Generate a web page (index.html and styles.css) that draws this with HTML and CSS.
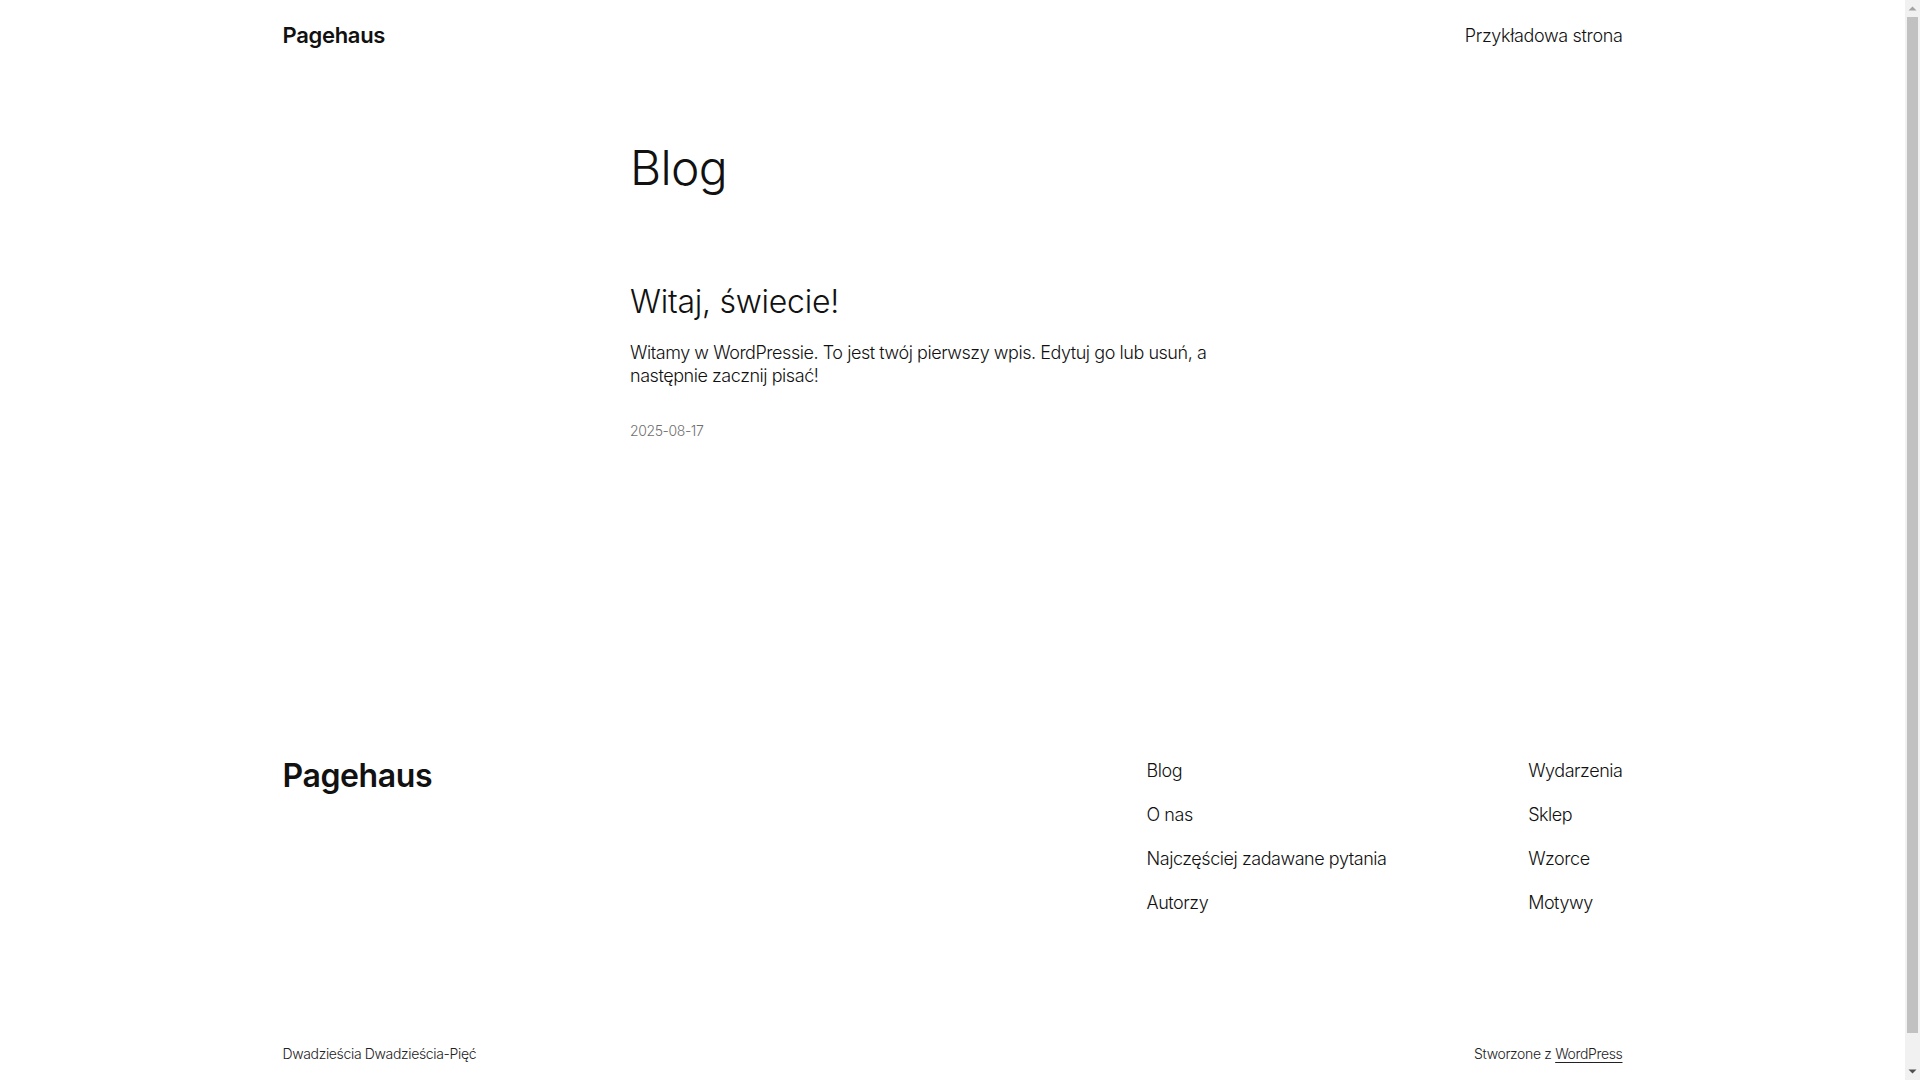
FILE: index.html
```html
<!DOCTYPE html>
<html lang="pl">
<head>
<meta charset="utf-8">
<title>Blog – Pagehaus</title>
<link rel="stylesheet" href="styles.css">
</head>
<body>
<div class="page">
  <header class="site-header">
    <a class="site-title" href="#">Pagehaus</a>
    <nav class="header-nav"><a href="#">Przykładowa strona</a></nav>
  </header>
  <main class="main">
    <h1 class="page-title">Blog</h1>
    <article class="post">
      <h2 class="post-title"><a href="#">Witaj, świecie!</a></h2>
      <p class="post-excerpt">Witamy w WordPressie. To jest twój pierwszy wpis. Edytuj go lub usuń, a następnie zacznij pisać!</p>
      <time class="post-date">2025-08-17</time>
    </article>
  </main>
  <footer class="site-footer">
    <div class="footer-row">
      <a class="footer-title" href="#">Pagehaus</a>
      <div class="footer-navs">
        <ul class="footer-nav">
          <li><a href="#">Blog</a></li>
          <li><a href="#">O nas</a></li>
          <li><a href="#">Najczęściej zadawane pytania</a></li>
          <li><a href="#">Autorzy</a></li>
        </ul>
        <ul class="footer-nav">
          <li><a href="#">Wydarzenia</a></li>
          <li><a href="#">Sklep</a></li>
          <li><a href="#">Wzorce</a></li>
          <li><a href="#">Motywy</a></li>
        </ul>
      </div>
    </div>
    <div class="footer-bottom">
      <p>Dwadzieścia Dwadzieścia-Pięć</p>
      <p>Stworzone z <a class="wp-link" href="#">WordPress</a></p>
    </div>
  </footer>
</div>
<div class="scrollbar" aria-hidden="true">
  <div class="sb-btn sb-up"><svg width="15" height="17" viewBox="0 0 15 17"><path d="M3.5 10.5 L7.5 6.5 L11.5 10.5 Z" fill="#a3a3a3"/></svg></div>
  <div class="sb-track"><div class="sb-thumb"></div></div>
  <div class="sb-btn sb-down"><svg width="15" height="17" viewBox="0 0 15 17"><path d="M3.5 6.5 L7.5 10.5 L11.5 6.5 Z" fill="#505050"/></svg></div>
</div>
</body>
</html>
```

FILE: styles.css
```css
html, body {
  margin: 0;
  padding: 0;
  background: #ffffff;
}
body {
  font-family: Inter, "Noto Sans", sans-serif;
  font-weight: 300;
  color: #111111;
  font-size: 18px;
}
a {
  color: inherit;
  text-decoration: none;
}
.page {
  margin-right: 15px;
}
.site-header {
  width: 1340px;
  height: 70px;
  margin: 0 auto;
  display: flex;
  justify-content: space-between;
  align-items: center;
}
.site-title {
  font-size: 22px;
  font-weight: 600;
  letter-spacing: -0.3px;
}
.header-nav {
  font-size: 18px;
  letter-spacing: -0.35px;
}
.main {
  width: 645px;
  margin: 0 auto;
  padding-top: 71px;
}
.page-title {
  margin: 0;
  font-size: 48px;
  line-height: 54px;
  font-weight: 300;
  letter-spacing: -0.7px;
}
.post {
  margin-top: 88px;
}
.post-title {
  margin: 0;
  font-size: 32px;
  line-height: 38px;
  font-weight: 300;
  letter-spacing: -0.25px;
}
.post-excerpt {
  margin: 20px 0 0;
  line-height: 23.4px;
  letter-spacing: -0.45px;
}
.post-date {
  display: block;
  margin-top: 33px;
  font-size: 14px;
  line-height: 19.6px;
  color: #6f6f6f;
  letter-spacing: -0.4px;
}
.site-footer {
  width: 1340px;
  margin: 0 auto;
  padding-top: 317px;
  padding-bottom: 48px;
}
.footer-row {
  display: flex;
  justify-content: space-between;
  align-items: flex-start;
}
.footer-title {
  font-size: 32px;
  line-height: 38.4px;
  font-weight: 600;
  letter-spacing: -0.4px;
}
.footer-navs {
  display: flex;
  width: 476px;
  justify-content: space-between;
  padding-top: 2px;
}
.footer-nav {
  list-style: none;
  margin: 0;
  padding: 0;
  display: flex;
  flex-direction: column;
  gap: 20px;
  line-height: 24px;
  letter-spacing: -0.45px;
}
.footer-bottom {
  margin-top: 129px;
  display: flex;
  justify-content: space-between;
  font-size: 14px;
  line-height: 19.6px;
  color: #222222;
  letter-spacing: -0.35px;
}
.footer-bottom p {
  margin: 0;
}
.wp-link {
  text-decoration: underline;
  text-underline-offset: 3px;
}

/* imitation of the classic browser scrollbar seen in the screenshot */
.scrollbar {
  position: fixed;
  top: 0;
  right: 0;
  width: 15px;
  height: 100vh;
  background: #f1f1f1;
  display: flex;
  flex-direction: column;
}
.sb-btn {
  height: 17px;
  flex: none;
}
.sb-btn svg {
  display: block;
}
.sb-track {
  flex: 1;
  padding: 0 2px 30px;
  display: flex;
}
.sb-thumb {
  flex: 1;
  background: #c1c1c1;
}
```
